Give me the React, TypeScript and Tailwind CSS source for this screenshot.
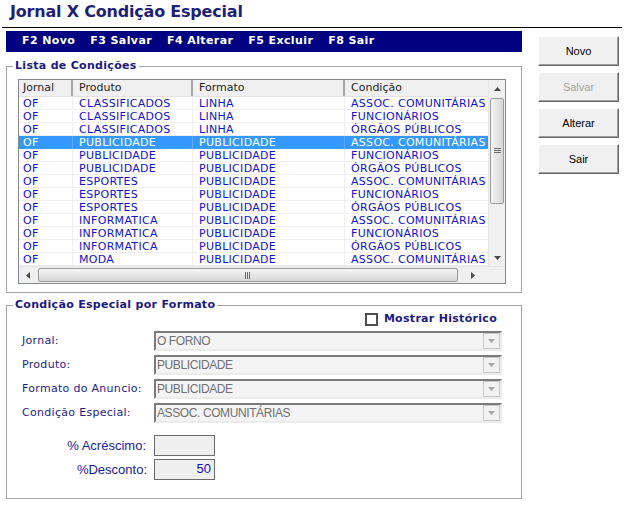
import React from 'react';

const rows = [
  ['OF', 'CLASSIFICADOS', 'LINHA', 'ASSOC. COMUNITÁRIAS'],
  ['OF', 'CLASSIFICADOS', 'LINHA', 'FUNCIONÁRIOS'],
  ['OF', 'CLASSIFICADOS', 'LINHA', 'ÓRGÃOS PÚBLICOS'],
  ['OF', 'PUBLICIDADE', 'PUBLICIDADE', 'ASSOC. COMUNITÁRIAS'],
  ['OF', 'PUBLICIDADE', 'PUBLICIDADE', 'FUNCIONÁRIOS'],
  ['OF', 'PUBLICIDADE', 'PUBLICIDADE', 'ÓRGÃOS PÚBLICOS'],
  ['OF', 'ESPORTES', 'PUBLICIDADE', 'ASSOC. COMUNITÁRIAS'],
  ['OF', 'ESPORTES', 'PUBLICIDADE', 'FUNCIONÁRIOS'],
  ['OF', 'ESPORTES', 'PUBLICIDADE', 'ÓRGÃOS PÚBLICOS'],
  ['OF', 'INFORMATICA', 'PUBLICIDADE', 'ASSOC. COMUNITÁRIAS'],
  ['OF', 'INFORMATICA', 'PUBLICIDADE', 'FUNCIONÁRIOS'],
  ['OF', 'INFORMATICA', 'PUBLICIDADE', 'ÓRGÃOS PÚBLICOS'],
  ['OF', 'MODA', 'PUBLICIDADE', 'ASSOC. COMUNITÁRIAS'],
];

const headers = ['Jornal', 'Produto', 'Formato', 'Condição'];

// small triangle used by scroll buttons and combos
const Tri = ({ dir, color = '#4a4a4a' }: { dir: 'up' | 'down' | 'left' | 'right'; color?: string }) => {
  const pts = {
    up: '0,4 7,4 3.5,0',
    down: '0,0 7,0 3.5,4',
    left: '4,0 4,7 0,3.5',
    right: '0,0 0,7 4,3.5',
  }[dir];
  const vertical = dir === 'up' || dir === 'down';
  return (
    <svg width={vertical ? 7 : 4} height={vertical ? 4 : 7}>
      <polygon points={pts} fill={color} />
    </svg>
  );
};

function Combo({ value }: { value: string }) {
  return (
    <div className="w-[348px] h-[20px] flex items-center border-2 border-t-[#7b7b7b] border-l-[#7b7b7b] border-r-[#ebebeb] border-b-[#ebebeb] bg-[#f4f4f4]">
      <span className="flex-1 pl-[1px] font-['Liberation_Sans',Arial,sans-serif] text-[12px] tracking-[-0.4px] text-[#707070] whitespace-nowrap overflow-hidden">
        {value}
      </span>
      <span className="w-[17px] h-[16px] flex items-center justify-center border border-[#cacaca] bg-[#f2f2f2]">
        <Tri dir="down" color="#a6a6a6" />
      </span>
    </div>
  );
}

function WinButton({ label, disabled }: { label: string; disabled?: boolean }) {
  return (
    <button
      className={
        "w-[81px] h-[30px] bg-[#f0f0f0] border border-t-white border-l-white border-r-[#696969] border-b-[#696969] shadow-[inset_-1px_-1px_0_#a0a0a0] font-['Liberation_Sans',Arial,sans-serif] text-[11px] " +
        (disabled ? 'text-[#a3a3a3]' : 'text-black')
      }
    >
      {label}
    </button>
  );
}

export default function App() {
  return (
    <div className="w-[630px] h-[511px] bg-white overflow-hidden font-['DejaVu_Sans',Verdana,sans-serif] tracking-[0.3px]">
      {/* Title */}
      <div className="h-[27px] pl-[10px] pt-[2px]">
        <h1 className="text-[16px] leading-[20px] font-bold tracking-[-0.2px] text-[#1f1f78]">Jornal X Condição Especial</h1>
      </div>
      <div className="ml-[2px] w-[620px] h-px bg-black" />

      <div className="flex mt-[3px]">
        <div className="ml-[6px] w-[516px]">
          {/* Shortcut bar */}
          <div className="h-[21px] bg-[#000080] flex items-center gap-[15px] pl-[16px] text-white text-[11px] font-bold tracking-[0.4px]">
            <span>F2 Novo</span>
            <span>F3 Salvar</span>
            <span>F4 Alterar</span>
            <span>F5 Excluir</span>
            <span>F8 Sair</span>
          </div>

          {/* Lista de Condições */}
          <fieldset className="mt-[7px] border border-[#a3a3a3] px-[6px] pb-[8px] min-w-0">
            <legend className="px-[2px] text-[11px] leading-[14px] font-bold text-[#1a1a80]">Lista de Condições</legend>
            <div className="ml-[5px] mt-[6px] w-[488px] h-[205px] border border-[#828790] bg-white flex flex-col">
              <div className="flex h-[186px]">
                <div className="w-[469px]">
                  {/* header */}
                  <div className="grid grid-cols-[54px_120px_152px_143px] h-[17px] bg-[#f0f0f0] border-b border-[#e2e2e2]">
                    {headers.map((h, i) => (
                      <div
                        key={h}
                        className={
                          'text-[11px] leading-[16px] tracking-normal text-[#1e1e1e] ' +
                          (i === 0 ? 'pl-[4px] ' : 'pl-[6px] ') +
                          (i < 3 ? 'border-r-2 border-[#a5a5a5]' : '')
                        }
                      >
                        {h}
                      </div>
                    ))}
                  </div>
                  {/* rows */}
                  {rows.map((r, ri) => {
                    const sel = ri === 3;
                    return (
                      <div
                        key={ri}
                        className={
                          'grid grid-cols-[54px_120px_152px_143px] h-[13px] text-[11px] leading-[13px] ' +
                          (sel
                            ? 'bg-[#3399ff] text-white border-b border-dotted border-[#c8823c]'
                            : 'text-[#1212c8] border-b border-[#efefef]')
                        }
                      >
                        {r.map((c, ci) => (
                          <div
                            key={ci}
                            className={
                              'whitespace-nowrap ' +
                              (ci === 0 ? 'pl-[4px] ' : 'pl-[6px] ') +
                              (ci < 3 ? (sel ? 'border-r border-[#59acff]' : 'border-r border-[#efefef]') : '')
                            }
                          >
                            {c}
                          </div>
                        ))}
                      </div>
                    );
                  })}
                </div>
                {/* vertical scrollbar */}
                <div className="w-[17px] bg-[#f0f0f0] border-l border-[#e6e6e6] flex flex-col">
                  <div className="h-[17px] flex items-center justify-center">
                    <Tri dir="up" />
                  </div>
                  <div className="mt-[1px] mx-[1px] h-[106px] rounded-[2px] border border-[#9b9b9b] bg-linear-to-r from-[#f5f5f5] to-[#d8d8d8] flex items-center justify-center">
                    <svg width="7" height="6">
                      <rect x="0" y="0" width="7" height="1" fill="#6e6e6e" />
                      <rect x="0" y="2" width="7" height="1" fill="#6e6e6e" />
                      <rect x="0" y="4" width="7" height="1" fill="#6e6e6e" />
                    </svg>
                  </div>
                  <div className="flex-1" />
                  <div className="h-[17px] flex items-center justify-center">
                    <Tri dir="down" />
                  </div>
                </div>
              </div>
              {/* horizontal scrollbar */}
              <div className="h-[17px] flex bg-[#f0f0f0] border-t border-[#e6e6e6]">
                <div className="w-[17px] flex items-center justify-center">
                  <Tri dir="left" />
                </div>
                <div className="ml-[2px] my-[1px] w-[420px] rounded-[2px] border border-[#9b9b9b] bg-linear-to-b from-[#f5f5f5] to-[#d8d8d8] flex items-center justify-center">
                  <svg width="6" height="7">
                    <rect x="0" y="0" width="1" height="7" fill="#6e6e6e" />
                    <rect x="2" y="0" width="1" height="7" fill="#6e6e6e" />
                    <rect x="4" y="0" width="1" height="7" fill="#6e6e6e" />
                  </svg>
                </div>
                <div className="flex-1 flex items-center justify-center">
                  <Tri dir="right" />
                </div>
                <div className="w-[17px]" />
              </div>
            </div>
          </fieldset>

          {/* Condição Especial por Formato */}
          <fieldset className="mt-[5px] border border-[#a3a3a3] px-[6px] pb-[18px] min-w-0">
            <legend className="px-[2px] text-[11px] leading-[14px] font-bold text-[#1a1a80]">
              Condição Especial por Formato
            </legend>
            <div className="mt-[1px] flex justify-end items-center gap-[6px] mr-[18px] h-[13px]">
              <span className="w-[13px] h-[13px] border-2 border-[#4f4f4f] bg-white" />
              <span className="text-[11px] font-bold text-[#1a1a80]">Mostrar Histórico</span>
            </div>

            <div className="mt-[5px] ml-[9px] grid grid-cols-[132px_348px] gap-y-[4px] items-center">
              <span className="text-[11px] text-[#1c1c8c]">Jornal:</span>
              <Combo value="O FORNO" />
              <span className="text-[11px] text-[#1c1c8c]">Produto:</span>
              <Combo value="PUBLICIDADE" />
              <span className="text-[11px] text-[#1c1c8c]">Formato do Anuncio:</span>
              <Combo value="PUBLICIDADE" />
              <span className="text-[11px] text-[#1c1c8c]">Condição Especial:</span>
              <Combo value="ASSOC. COMUNITÁRIAS" />
            </div>

            <div className="mt-[12px] ml-[9px] grid grid-cols-[132px_61px] gap-y-[3px] items-center font-['Liberation_Sans',Arial,sans-serif] tracking-normal">
              <span className="text-right pr-[8px] text-[13px] text-[#20209a]">% Acréscimo:</span>
              <div className="h-[21px] border border-[#6b6b6b] bg-[#efefef]" />
              <span className="text-right pr-[7px] text-[13px] text-[#20209a]">%Desconto:</span>
              <div className="h-[21px] border border-[#6b6b6b] bg-[#efefef] text-right pr-[3px] text-[13px] leading-[17px] text-[#1010cc]">
                50
              </div>
            </div>
          </fieldset>
        </div>

        {/* Right-hand buttons */}
        <div className="ml-[16px] pt-[5px] flex flex-col gap-[6px] tracking-normal">
          <WinButton label="Novo" />
          <WinButton label="Salvar" disabled />
          <WinButton label="Alterar" />
          <WinButton label="Sair" />
        </div>
      </div>
    </div>
  );
}
